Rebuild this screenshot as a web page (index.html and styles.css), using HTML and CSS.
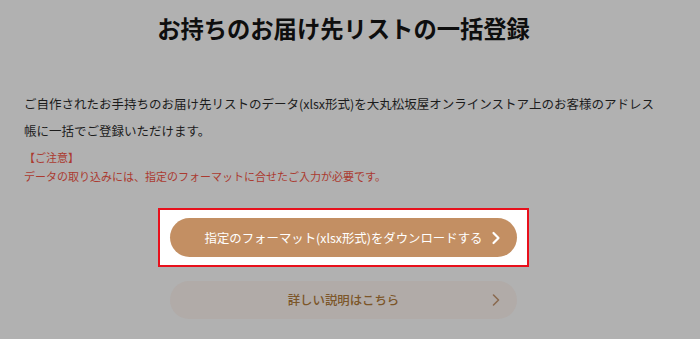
FILE: index.html
```
<!DOCTYPE html>
<html lang="ja">
<head>
<meta charset="utf-8">
<link rel="stylesheet" href="styles.css">
</head>
<body>
<div class="page">
  <h1 class="title">お持ちのお届け先リストの一括登録</h1>
  <p class="lead">ご自作されたお手持ちのお届け先リストのデータ(xlsx形式)を大丸松坂屋オンラインストア上のお客様のアドレス帳に一括でご登録いただけます。</p>
  <p class="notice">【ご注意】<br>データの取り込みには、指定のフォーマットに合せたご入力が必要です。</p>
  <div class="spot">
    <a class="btn btn-main">
      <span class="btn-label">指定のフォーマット(xlsx形式)をダウンロードする</span>
      <svg class="chev" width="10" height="14" viewBox="0 0 10 14"><polyline points="2.5,2 7.5,7 2.5,12" fill="none" stroke="#ffffff" stroke-width="2.2" stroke-linecap="round" stroke-linejoin="round"/></svg>
    </a>
  </div>
  <a class="btn btn-sub">
    <span class="btn-label">詳しい説明はこちら</span>
    <svg class="chev" width="10" height="14" viewBox="0 0 10 14"><polyline points="2.5,2 7.5,7 2.5,12" fill="none" stroke="#8a6a50" stroke-width="1.6" stroke-linecap="round" stroke-linejoin="round"/></svg>
  </a>
</div>
</body>
</html>
```
FILE: styles.css
```
html, body {
  margin: 0;
  padding: 0;
  background: #b1b1b1;
}
body {
  font-family: "Noto Sans CJK JP", "Noto Sans", sans-serif;
  width: 700px;
  height: 339px;
  overflow: hidden;
}
.page {
  display: flex;
  flex-direction: column;
  align-items: center;
  padding: 11px 37px 0 24px;
}
.title {
  margin: 0;
  font-size: 23.3px;
  line-height: 34px;
  font-weight: 700;
  color: #0e0e0e;
  text-align: center;
}
.lead {
  align-self: stretch;
  margin: 45px 5px 0 0;
  font-size: 12.5px;
  line-height: 27px;
  color: #1c1c1c;
}
.notice {
  align-self: stretch;
  margin: 4px 0 0;
  font-size: 11px;
  line-height: 19px;
  color: #ab3a30;
}
.spot {
  margin-top: 22px;
  background: #ffffff;
  border: 2px solid #e8101c;
  padding: 8px 10px;
}
.btn {
  width: 347px;
  box-sizing: border-box;
  display: flex;
  align-items: center;
  justify-content: center;
  position: relative;
  border-radius: 20px;
  font-size: 12.4px;
  text-decoration: none;
}
.btn-main {
  height: 39px;
  background: #c38f63;
  color: #ffffff;
}
.btn-sub {
  margin-top: 14px;
  height: 38px;
  background: #b1aba8;
  color: #7c5629;
  font-weight: 500;
}
.chev {
  position: absolute;
  right: 16px;
  top: 50%;
  margin-top: -7px;
}
```
